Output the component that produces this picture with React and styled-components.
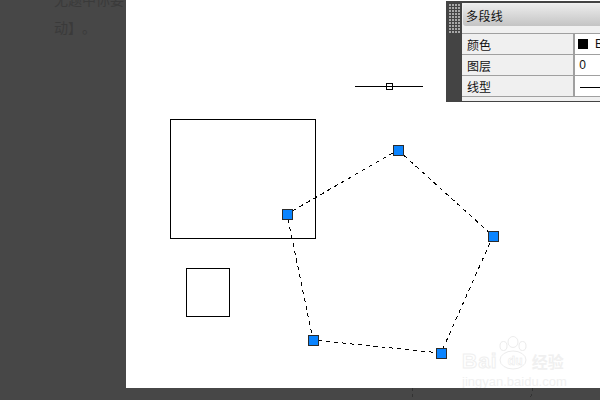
import React from 'react';
import styled, { createGlobalStyle } from 'styled-components';

const GlobalStyle = createGlobalStyle`
  html, body {
    margin: 0;
    padding: 0;
    background: #474747;
  }
`;

const Page = styled.div`
  position: relative;
  width: 600px;
  height: 400px;
  overflow: hidden;
  display: flex;
  flex-direction: column;
  background: #474747;
`;

const Main = styled.div`
  display: flex;
  height: 388px;
  flex: 0 0 388px;
`;

const Gutter = styled.div`
  width: 126px;
  flex: 0 0 126px;
  overflow: hidden;
  padding-left: 54px;
  box-sizing: border-box;
  font-family: "Noto Sans CJK SC", sans-serif;
  font-size: 14px;
  line-height: 28px;
  color: #333;
  white-space: nowrap;
  text-spacing-trim: space-all;
`;

const GutterText = styled.div`
  margin-top: -15px;
  opacity: 0.6;
`;

const Canvas = styled.div`
  position: relative;
  flex: 1;
  background: #fff;
  overflow: hidden;
`;

const Drawing = styled.svg`
  position: absolute;
  left: 0;
  top: 0;
`;

const Palette = styled.div`
  position: absolute;
  left: 320px;
  top: 1px;
  width: 160px;
  height: 101px;
  display: flex;
  background: #444;
`;

const Grip = styled.div`
  width: 16px;
  flex: 0 0 16px;
  padding: 3px 0 0 3px;
  box-sizing: border-box;
  display: grid;
  grid-template-columns: repeat(4, 2px);
  grid-auto-rows: 2px;
  gap: 1px;
  align-content: start;
`;

const Dot = styled.span`
  background: #a8a8a8;
`;

const Body = styled.div`
  flex: 1;
  margin: 2px 0 1px;
  background: #f0f0f0;
  display: flex;
  flex-direction: column;
`;

const Title = styled.div`
  height: 22px;
  margin: 1px 0 0 1px;
  padding-left: 3px;
  display: flex;
  align-items: center;
  border-radius: 3px 0 0 3px;
  background: linear-gradient(#ececec, #c4c4c4);
  font-family: "Noto Sans CJK SC", sans-serif;
  font-size: 12px;
  letter-spacing: 0.4px;
  color: #111;
`;

const Rows = styled.div`
  margin-top: 7px;
  border-top: 1px solid #a0a0a0;
`;

const Row = styled.div`
  height: 20px;
  display: flex;
  border-bottom: 1px solid #a0a0a0;
  font-family: "Noto Sans CJK SC", sans-serif;
  font-size: 12px;
  color: #111;
`;

const Label = styled.div`
  width: 113px;
  flex: 0 0 113px;
  padding-left: 5px;
  box-sizing: border-box;
  display: flex;
  align-items: center;
  border-right: 2px solid #a0a0a0;
`;

const Value = styled.div`
  flex: 1;
  padding-left: 1px;
  display: flex;
  align-items: center;
  background: #fff;
  font-family: "Liberation Sans", sans-serif;
  white-space: nowrap;
  overflow: hidden;
`;

const Swatch = styled.span`
  width: 10px;
  height: 10px;
  margin: 0 7px 0 2px;
  background: #000;
`;

const LineSample = styled.span`
  width: 40px;
  height: 1px;
  margin: 3px 0 0 4px;
  background: #000;
`;

const Watermark = styled.div`
  position: absolute;
  left: 336px;
  top: 336px;
  width: 110px;
  font-family: "Liberation Sans", sans-serif;
  color: #fff;
`;

const Brand = styled.div`
  display: flex;
  align-items: center;
  height: 22px;
  margin-top: 14px;
  font-size: 21px;
  font-weight: 700;
  line-height: 22px;
  letter-spacing: 1px;
  -webkit-text-stroke: 1px #efefef;
`;

const PawText = styled.span`
  width: 33px;
  margin-left: 1px;
  text-align: center;
  font-size: 12px;
  letter-spacing: 0;
  position: relative;
  -webkit-text-stroke: 0.5px #e8e8e8;
`;

const BrandCjk = styled.span`
  font-family: "Noto Sans CJK SC", sans-serif;
  font-size: 16px;
  letter-spacing: 0;
  color: #f0f0f0;
  -webkit-text-stroke: 0;
`;

const Domain = styled.div`
  margin-top: 3px;
  font-size: 13px;
  line-height: 14px;
  white-space: nowrap;
  color: #f0f0f0;
`;

const Paw = styled.svg`
  position: absolute;
  left: 36px;
  top: 0;
`;

const Footer = styled.svg`
  display: block;
  flex: 1;
`;

const handles = [
  [272, 150],
  [367, 236],
  [315, 353],
  [187, 340],
  [161, 214],
];

const Handle = ({ x, y }) => (
  <rect x={x - 4.5} y={y - 4.5} width="10" height="10" fill="#0a84ff" stroke="#2b2b2b" strokeWidth="1" />
);

const App = () => (
  <Page>
    <GlobalStyle />
    <Main>
      <Gutter>
        <GutterText>
          无题中你要
          <br />
          动】。
        </GutterText>
      </Gutter>
      <Canvas>
        <Drawing width="474" height="388" shapeRendering="crispEdges">
          <rect x="44.5" y="119.5" width="145" height="119" fill="none" stroke="#000" />
          <rect x="60.5" y="268.5" width="43" height="48" fill="none" stroke="#000" />
          <line x1="229" y1="86.5" x2="297" y2="86.5" stroke="#000" />
          <rect x="260.5" y="83.5" width="6" height="6" fill="none" stroke="#000" />
        </Drawing>
        <Drawing width="474" height="388" shapeRendering="crispEdges">
          <polygon
            points={handles.map((p) => p.join(',')).join(' ')}
            fill="none"
            stroke="#000"
            strokeWidth="1"
            strokeDasharray="4 4"
          />
          {handles.map(([x, y]) => (
            <Handle key={`${x}-${y}`} x={x} y={y} />
          ))}
        </Drawing>
        <Palette>
          <Grip>
            {Array.from({ length: 40 }, (_, i) => (
              <Dot key={i} />
            ))}
          </Grip>
          <Body>
            <Title>多段线</Title>
            <Rows>
              <Row>
                <Label>颜色</Label>
                <Value>
                  <Swatch />B
                </Value>
              </Row>
              <Row>
                <Label>图层</Label>
                <Value>&nbsp;0</Value>
              </Row>
              <Row>
                <Label>线型</Label>
                <Value>
                  <LineSample />
                </Value>
              </Row>
            </Rows>
          </Body>
        </Palette>
        <Watermark>
          <Paw width="30" height="34" viewBox="0 0 30 34">
            <g fill="#fff" stroke="#ececec" strokeWidth="1">
              <ellipse cx="15" cy="24" rx="13" ry="9" />
              <ellipse cx="15" cy="6" rx="5" ry="5.5" />
              <ellipse cx="5.5" cy="10" rx="3.5" ry="4.5" />
              <ellipse cx="24.5" cy="10" rx="3.5" ry="4.5" />
            </g>
          </Paw>
          <Brand>
            Bai
            <PawText>du</PawText>
            <BrandCjk>经验</BrandCjk>
          </Brand>
          <Domain>jingyan.baidu.com</Domain>
        </Watermark>
      </Canvas>
    </Main>
    <Footer width="600" height="12" shapeRendering="crispEdges">
      <line x1="412.5" y1="0" x2="412.5" y2="12" stroke="#333" strokeDasharray="3 3" />
      <line x1="533" y1="0" x2="530" y2="12" stroke="#333" strokeDasharray="3 3" />
    </Footer>
  </Page>
);

export default App;
